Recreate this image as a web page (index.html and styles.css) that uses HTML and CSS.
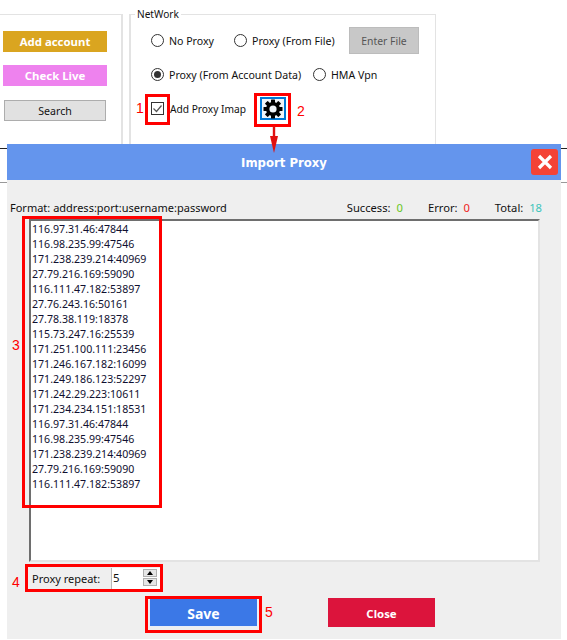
FILE: index.html
```html
<!DOCTYPE html>
<html lang="en">
<head>
<meta charset="utf-8">
<title>Import Proxy</title>
<link rel="stylesheet" href="styles.css">
</head>
<body>
<div class="page">
  <span class="bg-line bg-dark"></span>
  <span class="bg-line bg-gray"></span>

  <section class="top">
    <div class="side">
      <button class="act gold">Add account</button>
      <button class="act violet">Check Live</button>
      <button class="search">Search</button>
    </div>
    <div class="net">
      <span class="legend">NetWork</span>
      <div class="net-row r1">
        <label class="opt o-none"><i class="radio"></i>No Proxy</label>
        <label class="opt o-file"><i class="radio"></i>Proxy (From File)</label>
        <button class="enter">Enter File</button>
      </div>
      <div class="net-row r2">
        <label class="opt o-acc"><i class="radio on"></i>Proxy (From Account Data)</label>
        <label class="opt"><i class="radio"></i>HMA Vpn</label>
      </div>
      <div class="net-row r3">
        <label class="opt o-imap">
          <svg class="check" width="13" height="13" viewBox="0 0 13 13"><rect x=".5" y=".5" width="12" height="12" fill="#fff" stroke="#333"/><path d="M2.5 6.5l3 3 5-6" fill="none" stroke="#555" stroke-width="1.2"/></svg>
          <span class="imap">Add Proxy Imap</span>
        </label>
        <button class="gear">
          <svg width="20" height="20" viewBox="0 0 20 20">
            <g fill="#000">
              <rect x="8" y="0.5" width="4" height="19" rx=".5"/>
              <rect x="8" y="0.5" width="4" height="19" rx=".5" transform="rotate(45 10 10)"/>
              <rect x="8" y="0.5" width="4" height="19" rx=".5" transform="rotate(90 10 10)"/>
              <rect x="8" y="0.5" width="4" height="19" rx=".5" transform="rotate(135 10 10)"/>
            </g>
            <circle cx="10" cy="10" r="5.4" fill="none" stroke="#000" stroke-width="3.2"/>
            <circle cx="10" cy="10" r="3.6" fill="#f0f5fa"/>
          </svg>
        </button>
      </div>
    </div>
  </section>

  <section class="dialog">
    <header class="title">
      <h1>Import Proxy</h1>
      <button class="x">
        <svg width="16" height="16" viewBox="0 0 16 16"><path d="M2 2l12 12M14 2L2 14" stroke="#fff" stroke-width="3.2"/></svg>
      </button>
    </header>
    <div class="stats">
      <span>Format: address:port:username:password</span>
      <div class="counts">
        <span>Success: <b class="green">0</b></span>
        <span>Error: <b class="red">0</b></span>
        <span>Total: <b class="teal">18</b></span>
      </div>
    </div>
    <div class="proxies">116.97.31.46:47844
116.98.235.99:47546
171.238.239.214:40969
27.79.216.169:59090
116.111.47.182:53897
27.76.243.16:50161
27.78.38.119:18378
115.73.247.16:25539
171.251.100.111:23456
171.246.167.182:16099
171.249.186.123:52297
171.242.29.223:10611
171.234.234.151:18531
116.97.31.46:47844
116.98.235.99:47546
171.238.239.214:40969
27.79.216.169:59090
116.111.47.182:53897</div>
    <div class="repeat">
      <span class="repeat-label">Proxy repeat:</span>
      <div class="spin">
        <span>5</span>
        <div class="arrows">
          <i class="arr up"></i>
          <i class="arr down"></i>
        </div>
      </div>
    </div>
    <div class="actions">
      <button class="save">Save</button>
      <button class="close">Close</button>
    </div>
  </section>

  <span class="mark m1"></span>
  <span class="mark m2"></span>
  <span class="mark m3"></span>
  <span class="mark m4"></span>
  <span class="mark m5"></span>
  <span class="num n1">1</span>
  <span class="num n2">2</span>
  <span class="num n3">3</span>
  <span class="num n4">4</span>
  <span class="num n5">5</span>
  <svg class="pointer" width="10" height="28" viewBox="0 0 10 28"><path d="M5 0v14" stroke="#e01010" stroke-width="2.4"/><path d="M1 10h8l-4 17z" fill="#e01010"/></svg>
</div>
</body>
</html>
```

FILE: styles.css
```css
* { box-sizing: border-box; }
html, body { margin: 0; padding: 0; background: #fff; }
body { font-family: "Noto Sans", "Liberation Sans", sans-serif; font-size: 10.6px; color: #111; }
button { font-family: inherit; padding: 0; cursor: default; }

.page { position: relative; width: 567px; height: 640px; overflow: hidden; }

.bg-line { position: absolute; left: 0; right: 0; height: 1px; }
.bg-dark { top: 148px; background: #222; }
.bg-gray { top: 182px; background: #999; }

.top { height: 144px; display: flex; padding-top: 14px; gap: 6px; }
.side {
  width: 123px; border: 2px solid #e3e3e3; border-width: 1px 2px 0 0;
  display: flex; flex-direction: column; align-items: flex-start; padding: 16px 0 0 3px;
}
.act {
  width: 104px; height: 21px; border: 0; color: #fff;
  font-weight: 700; font-size: 11.4px; margin-bottom: 13px;
}
.gold { background: #daa520; }
.violet { background: #ee82ee; }
.search {
  width: 102px; height: 21px; margin: 1px 0 0 1px;
  background: #e1e1e1; border: 1px solid #adadad; color: #111; font-size: 10.6px;
}

.net {
  position: relative; width: 307px;
  border: 2px solid #e3e3e3; border-width: 1px 1px 0 2px;
}
.legend {
  position: absolute; left: 4px; top: -8px; padding: 0 2px;
  background: #fff; font-size: 10.1px; line-height: 14px;
}
.net-row { position: absolute; left: 20px; right: 0; display: flex; align-items: center; }
.r1 { top: 12px; height: 27px; }
.r2 { top: 46px; height: 27px; }
.r3 { top: 80px; height: 27px; }
.opt { display: flex; align-items: center; gap: 5px; white-space: nowrap; }
.o-none { width: 83px; }
.o-file { width: 115px; }
.o-acc { width: 162px; }
.o-imap { width: 109px; }
.imap { font-size: 10.2px; margin-left: 1px; }
.radio {
  display: block; width: 13px; height: 13px; border-radius: 50%;
  border: 1px solid #333; background: #fff; position: relative;
}
.radio.on::after {
  content: ""; position: absolute; inset: 2px; border-radius: 50%; background: #333;
}
.check { display: block; }
.enter {
  width: 70px; height: 27px; background: #c8c8c8; border: 1px solid #bcbcbc;
  color: #555; font-size: 10.4px;
}
.gear {
  width: 26px; height: 23px; display: flex; align-items: center; justify-content: center;
  background: #f0f5fa; border: 2px solid #0078d7;
}

.dialog {
  position: relative; width: 554px; height: 495px; margin-left: 7px;
  background: #efefef;
}
.title {
  height: 36px; background: #6495ed; display: flex; align-items: center; justify-content: center;
  position: relative; padding-top: 1px;
}
.title h1 { margin: 0; color: #fff; font-size: 11.7px; font-weight: 700; font-family: "DejaVu Sans", sans-serif; }
.x {
  position: absolute; left: 524px; top: 5px; width: 27px; height: 26px;
  background: #f44336; border: 0; border-radius: 3px;
  display: flex; align-items: center; justify-content: center;
}

.stats {
  display: flex; justify-content: space-between; padding: 20px 19px 0 3px; height: 39px;
  line-height: 16px; font-size: 11px;
}
.counts { display: flex; gap: 25px; font-size: 11.2px; }
.counts b { font-weight: 400; margin-left: 3px; }
.green { color: #66c61c; }
.red { color: #f02020; }
.teal { color: #3cc4ba; }

.proxies {
  margin-left: 22px; width: 511px; height: 343px;
  background: #fff; padding: 1px 0 0 1px;
  border-style: solid; border-width: 2px; border-color: #6e6e6e #e3e3e3 #e3e3e3 #6e6e6e;
  white-space: pre-line; line-height: 15px; color: #101030;
}

.repeat { display: flex; align-items: stretch; margin: 6px 0 0 20px; width: 134px; height: 21px; font-size: 11px; }
.repeat-label { width: 85px; padding-left: 5px; border-right: 1px solid #b8b8b8; line-height: 22px; }
.spin { flex: 1; background: #fff; display: flex; justify-content: space-between; padding-left: 1px; line-height: 20px; font-size: 11.4px; }
.arrows { display: flex; flex-direction: column; gap: 1px; padding: 1px 4px 0 0; }
.arr {
  display: block; position: relative; width: 14px; height: 8px; background: #e6e6e6; border: 1px solid #b0b0b0;
}
.arr::after {
  content: ""; position: absolute; left: 3px; border-left: 3px solid transparent; border-right: 3px solid transparent;
}
.up::after { top: 1px; border-bottom: 4px solid #000; }
.down::after { top: 1px; border-top: 4px solid #000; }

.actions { display: flex; align-items: flex-start; padding: 8px 0 0 142px; gap: 70px; }
.save {
  width: 109px; height: 29px; margin-top: 1px; padding-top: 1px; background: #3b78e7; color: #fff; border: 1px solid #e9eef8;
  font-weight: 700; font-size: 14px;
}
.close {
  width: 107px; height: 29px; margin-top: 1px; padding-top: 1px; background: #dc143c; color: #fff; border: 0;
  font-weight: 700; font-size: 11.4px;
}

.mark { position: absolute; border: 3px solid #f00; }
.m1 { left: 145px; top: 94px; width: 25px; height: 31px; }
.m2 { left: 254px; top: 93px; width: 37px; height: 34px; }
.m3 { left: 22px; top: 216px; width: 140px; height: 292px; }
.m4 { left: 25px; top: 564px; width: 138px; height: 28px; }
.m5 { left: 145px; top: 596px; width: 117px; height: 37px; }

.num { position: absolute; color: #f00; font-size: 14px; line-height: 16px; font-family: "Liberation Sans", sans-serif; }
.n1 { left: 136px; top: 100px; }
.n2 { left: 297px; top: 103px; }
.n3 { left: 12px; top: 337px; }
.n4 { left: 12px; top: 574px; }
.n5 { left: 265px; top: 604px; }

.pointer { position: absolute; left: 269px; top: 126px; }
```
